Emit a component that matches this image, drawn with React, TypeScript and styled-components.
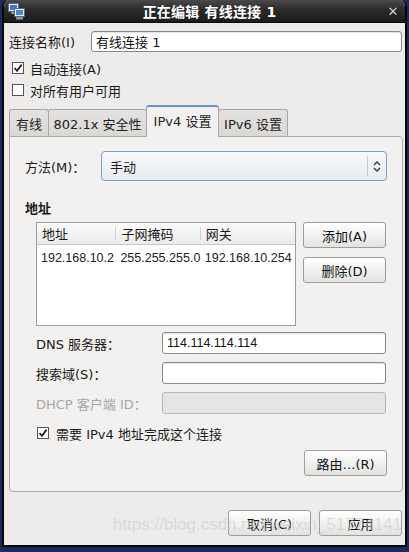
import React from 'react'
import styled, { createGlobalStyle, css } from 'styled-components'

const GlobalStyle = createGlobalStyle`
	html, body {
		margin: 0;
		padding: 0;
		background: #1b2a5c;
	}
	body {
		font-family: 'DejaVu Sans', 'Noto Sans CJK SC', sans-serif;
		font-size: 12px;
		color: #1a1a1a;
	}
`

const NetIcon = () => (
	<svg width="17" height="17" viewBox="0 0 17 17">
		<rect x="0.5" y="0.5" width="10" height="8" fill="#e8eef6" stroke="#5a6a80" />
		<rect x="2" y="2" width="7" height="5" fill="#3f78c8" />
		<rect x="3" y="9" width="5" height="2" fill="#8a94a0" />
		<rect x="6.5" y="5.5" width="10" height="8" fill="#e8eef6" stroke="#5a6a80" />
		<rect x="8" y="7" width="7" height="5" fill="#4a86d8" />
		<rect x="8" y="14" width="7" height="2.5" fill="#8a94a0" />
	</svg>
)

const Check = ({ checked }: { checked?: boolean }) => (
	<CheckBox>
		{checked && (
			<svg width="10" height="10" viewBox="0 0 10 10">
				<path d="M1.5 5 L4 7.8 L8.6 1.6" fill="none" stroke="#222" strokeWidth="1.8" />
			</svg>
		)}
	</CheckBox>
)

const tabs = [
	{ label: '有线', w: 40 },
	{ label: '802.1x 安全性', w: 99 },
	{ label: 'IPv4 设置', w: 73 },
	{ label: 'IPv6 设置', w: 70 },
]

const App: React.FC = () => {
	return (
		<>
			<GlobalStyle />
			<Window>
				<TitleBar>
					<IconSlot>
						<NetIcon />
					</IconSlot>
					<Title>正在编辑 有线连接 1</Title>
					<Close>✕</Close>
				</TitleBar>
				<Content>
					<NameRow>
						<span>连接名称(I)</span>
						<TextInput defaultValue="有线连接 1" />
					</NameRow>
					<Checks>
						<CheckRow>
							<Check checked />
							<span>自动连接(A)</span>
						</CheckRow>
						<CheckRow>
							<Check />
							<span>对所有用户可用</span>
						</CheckRow>
					</Checks>

					<Tabs>
						{tabs.map((t, i) => (
							<Tab key={t.label} $w={t.w} $active={i === 2}>
								{t.label}
							</Tab>
						))}
					</Tabs>
					<Panel>
						<MethodRow>
							<span>方法(M)：</span>
							<Combo>
								<ComboText>手动</ComboText>
								<ComboArrows>
									<svg width="8" height="11" viewBox="0 0 8 11">
										<path d="M1 4 L4 1 L7 4 M1 7 L4 10 L7 7" fill="none" stroke="#333" strokeWidth="1.3" />
									</svg>
								</ComboArrows>
							</Combo>
						</MethodRow>

						<SectionTitle>地址</SectionTitle>
						<AddressArea>
							<Table>
								<HeadRow>
									<HeadCell $w={80}>地址</HeadCell>
									<HeadCell $w={85}>子网掩码</HeadCell>
									<HeadCell $w={95} $last>网关</HeadCell>
								</HeadRow>
								<DataRow>
									<DataCell $w={80}>192.168.10.2</DataCell>
									<DataCell $w={85}>255.255.255.0</DataCell>
									<DataCell $w={95}>192.168.10.254</DataCell>
								</DataRow>
							</Table>
							<SideButtons>
								<Button>添加(A)</Button>
								<Button>删除(D)</Button>
							</SideButtons>
						</AddressArea>

						<FieldGrid>
							<FieldLabel>DNS 服务器：</FieldLabel>
							<TextInput $mono defaultValue="114.114.114.114" />
							<FieldLabel>搜索域(S)：</FieldLabel>
							<TextInput />
							<FieldLabel $disabled>DHCP 客户端 ID：</FieldLabel>
							<TextInput disabled />
						</FieldGrid>

						<RequireRow>
							<Check checked />
							<span>需要 IPv4 地址完成这个连接</span>
						</RequireRow>

						<RouteRow>
							<Button>路由…(R)</Button>
						</RouteRow>
					</Panel>

					<Footer>
						<Button>取消(C)</Button>
						<Button>应用</Button>
						<Watermark>https://blog.csdn.net/weixin_51774141</Watermark>
					</Footer>
				</Content>
			</Window>
		</>
	)
}

export default App

const Window = styled.div`
	margin-left: 2px;
	width: 405px;
	height: 547px;
	box-sizing: border-box;
	background: #edeceb;
	border: 2px solid #050505;
	border-top: none;
	border-radius: 7px 7px 0 0;
	display: flex;
	flex-direction: column;
	overflow: hidden;
`

const TitleBar = styled.div`
	height: 22px;
	flex-shrink: 0;
	display: flex;
	align-items: center;
	background: linear-gradient(#4a4a4a, #2a2a2a 45%, #1c1c1c);
	border-bottom: 1px solid #0a0a0a;
	color: #fff;
`

const IconSlot = styled.div`
	width: 26px;
	padding-left: 4px;
	display: flex;
	align-items: center;
`

const Title = styled.div`
	flex: 1;
	text-align: center;
	font-size: 14px;
	font-weight: bold;
	letter-spacing: 0.2px;
	padding-left: 4px;
`

const Close = styled.div`
	width: 24px;
	text-align: center;
	font-size: 13px;
	font-weight: bold;
	color: #c8c8c8;
`

const Content = styled.div`
	flex: 1;
	display: flex;
	flex-direction: column;
	padding: 8px 3px 0 5px;
	position: relative;
	font-size: 13px;
`

const inputBase = css`
	box-sizing: border-box;
	height: 22px;
	border: 1px solid #8a8a8a;
	border-radius: 3px;
	background: #fff;
	box-shadow: inset 0 1px 1px rgba(0, 0, 0, 0.12);
	padding: 0 4px;
	font-family: 'DejaVu Sans', 'Noto Sans CJK SC', sans-serif;
	font-size: 13px;
	color: #111;
	outline: none;

	&:disabled {
		background: #e6e5e3;
		border-color: #b8b8b8;
		box-shadow: none;
	}
`

const TextInput = styled.input<{ $mono?: boolean }>`
	${inputBase}
	${p =>
		p.$mono &&
		css`
			font-family: 'Liberation Sans', sans-serif;
			font-size: 12.5px;
		`}
`

const NameRow = styled.div`
	display: flex;
	align-items: center;
	justify-content: space-between;
	height: 21px;

	${TextInput} {
		width: 311px;
		height: 21px;
	}
`

const Checks = styled.div`
	display: flex;
	flex-direction: column;
	margin-top: 5px;
`

const CheckRow = styled.div`
	display: flex;
	align-items: center;
	gap: 6px;
	height: 22px;
	padding-left: 3px;
`

const CheckBox = styled.div`
	width: 12px;
	height: 12px;
	box-sizing: border-box;
	border: 1px solid #555;
	background: #fff;
	display: flex;
	align-items: center;
	justify-content: center;
`

const Tabs = styled.div`
	display: flex;
	align-items: flex-end;
	height: 31px;
	margin-top: 4px;
	position: relative;
	z-index: 1;
`

const Tab = styled.div<{ $w: number; $active?: boolean }>`
	width: ${p => p.$w}px;
	height: 27px;
	box-sizing: border-box;
	display: flex;
	align-items: center;
	justify-content: center;
	border: 1px solid #a8a8a8;
	border-bottom: none;
	border-radius: 3px 3px 0 0;
	background: linear-gradient(#e4e3e1, #d9d8d5);
	color: #222;
	margin-right: -1px;
	white-space: nowrap;

	${p =>
		p.$active &&
		css`
			height: 32px;
			margin-bottom: -1px;
			background: #f2f1f0;
			border-top: 2px solid #6d93c8;
			padding-bottom: 3px;
		`}
`

const Panel = styled.div`
	box-sizing: border-box;
	width: 394px;
	height: 356px;
	border: 1px solid #a8a8a8;
	border-radius: 0 4px 4px 4px;
	background: #f2f1f0;
	padding: 14px 15px 0 15px;
	display: flex;
	flex-direction: column;
`

const MethodRow = styled.div`
	display: flex;
	align-items: center;
	justify-content: space-between;
	height: 30px;
`

const Combo = styled.div`
	width: 286px;
	height: 30px;
	box-sizing: border-box;
	border: 1px solid #7a9ccf;
	border-radius: 4px;
	background: linear-gradient(#f9f9fa, #e6ebf2);
	display: flex;
	align-items: center;
`

const ComboText = styled.div`
	flex: 1;
	padding-left: 8px;
`

const ComboArrows = styled.div`
	width: 18px;
	height: 20px;
	border-left: 1px solid #c5c8cc;
	display: flex;
	align-items: center;
	justify-content: center;
`

const SectionTitle = styled.div`
	font-weight: bold;
	margin-top: 20px;
	height: 16px;
	line-height: 16px;
`

const AddressArea = styled.div`
	display: flex;
	gap: 7px;
	margin-top: 5px;
	padding-left: 11px;
`

const Table = styled.div`
	width: 260px;
	height: 104px;
	box-sizing: border-box;
	border: 1px solid #9c9c9c;
	background: #fff;
`

const HeadRow = styled.div`
	display: flex;
	height: 21px;
	border-bottom: 1px solid #c8c8c8;
	background: linear-gradient(#fbfbfb, #ebebeb);
`

const HeadCell = styled.div<{ $w: number; $last?: boolean }>`
	width: ${p => p.$w}px;
	box-sizing: border-box;
	padding-left: 5px;
	display: flex;
	align-items: center;
	position: relative;

	&::after {
		content: '';
		display: ${p => (p.$last ? 'none' : 'block')};
		position: absolute;
		right: 0;
		top: 4px;
		bottom: 4px;
		border-right: 1px solid #cfcfcf;
	}
`

const DataRow = styled.div`
	display: flex;
	height: 20px;
	align-items: center;
	margin-top: 3px;
`

const DataCell = styled.div<{ $w: number }>`
	width: ${p => p.$w}px;
	padding-left: 4px;
	box-sizing: border-box;
	font-family: 'Liberation Sans', sans-serif;
	font-size: 12.5px;
	white-space: nowrap;
	color: #222;
`

const SideButtons = styled.div`
	display: flex;
	flex-direction: column;
	gap: 9px;
`

const Button = styled.button`
	width: 83px;
	height: 26px;
	box-sizing: border-box;
	border: 1px solid #9d9d9d;
	border-radius: 3px;
	background: linear-gradient(#ffffff, #f1f1f0 50%, #e2e2e0);
	font-family: 'DejaVu Sans', 'Noto Sans CJK SC', sans-serif;
	font-size: 13px;
	color: #111;
	padding: 0;
`

const FieldGrid = styled.div`
	display: grid;
	grid-template-columns: 126px 224px;
	grid-auto-rows: 22px;
	row-gap: 8px;
	align-items: center;
	margin-top: 6px;
	padding-left: 11px;
`

const FieldLabel = styled.div<{ $disabled?: boolean }>`
	color: ${p => (p.$disabled ? '#a6a6a6' : '#1a1a1a')};
`

const RequireRow = styled.div`
	display: flex;
	align-items: center;
	gap: 7px;
	height: 22px;
	margin-top: 8px;
	padding-left: 12px;
`

const RouteRow = styled.div`
	display: flex;
	justify-content: flex-end;
	margin-top: 6px;
`

const Footer = styled.div`
	display: flex;
	justify-content: flex-end;
	gap: 8px;
	margin-top: 18px;
	position: relative;
`

const Watermark = styled.div`
	position: absolute;
	right: 0;
	top: 5px;
	font-family: 'Liberation Sans', sans-serif;
	font-size: 17px;
	color: rgba(200, 200, 200, 0.55);
	pointer-events: none;
	white-space: nowrap;
`
